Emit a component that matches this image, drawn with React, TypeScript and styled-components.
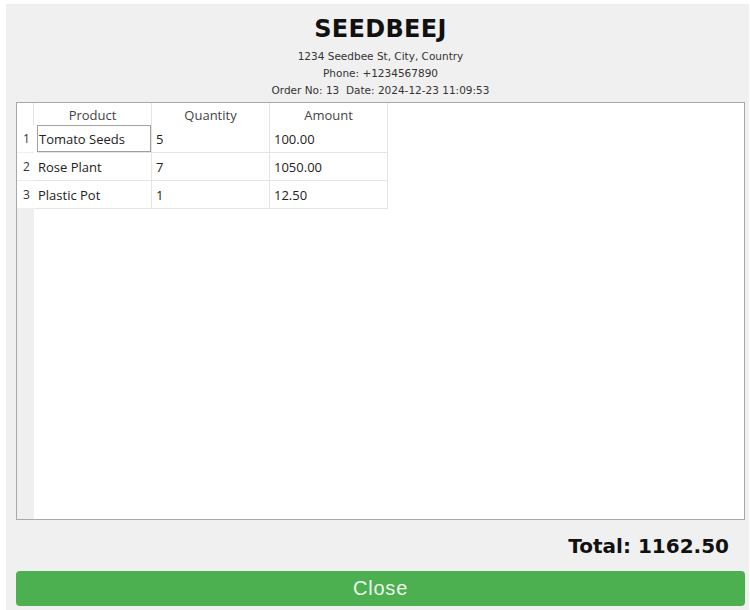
import React from "react";
import styled, { createGlobalStyle } from "styled-components";

const GlobalStyle = createGlobalStyle`
  html, body { margin: 0; padding: 0; background: #ffffff; }
  body { font-family: "DejaVu Sans", sans-serif; }
  * { box-sizing: border-box; }
`;

const Page = styled.div`
  padding: 4px 1px 0 6px;
  width: 750px;
  height: 610px;
`;

const Panel = styled.div`
  display: flex;
  flex-direction: column;
  height: 606px;
  background: #f0f0f0;
  border-top: 1px solid #f7e9e9;
  padding: 11px 4px 4px 10px;
`;

const Title = styled.h1`
  margin: 0;
  font-family: "DejaVu Sans", sans-serif;
  font-weight: bold;
  font-size: 24px;
  line-height: 26px;
  letter-spacing: 0.3px;
  text-align: center;
  color: #111;
`;

const Info = styled.div`
  margin-top: 6px;
  display: flex;
  flex-direction: column;
  align-items: center;
  font-family: "DejaVu Sans", sans-serif;
  font-size: 10.5px;
  line-height: 17px;
  color: #333;
`;

const Frame = styled.div`
  margin-top: 3px;
  flex: 1;
  border: 1px solid #a8a8a8;
  background: linear-gradient(to right, #efefef 0 17px, #ffffff 17px);
`;

const Grid = styled.div`
  display: grid;
  grid-template-columns: 17px 118px 118px 118px;
  grid-template-rows: 22px repeat(3, 28px);
  width: max-content;
  font-family: "Open Sans", sans-serif;
  font-size: 13px;
  color: #222;
`;

const HeadCell = styled.div`
  background: #fff;
  border-right: 1px solid #e4e4e4;
  display: flex;
  align-items: center;
  justify-content: center;
  color: #444;
  padding-top: 1px;
`;

const RowNum = styled.div`
  background: #fff;
  border-bottom: 1px solid #eeeeee;
  display: flex;
  align-items: center;
  justify-content: center;
  font-size: 12px;
  color: #333;
  padding-left: 2px;
`;

const Cell = styled.div<{ $selected?: boolean }>`
  background: #fff;
  border-right: 1px solid #e4e4e4;
  border-bottom: 1px solid #e4e4e4;
  display: flex;
  align-items: center;
  padding-left: 4px;
  ${(p) =>
    p.$selected
      ? `box-shadow: inset 0 0 0 1px #a0a0a0; margin-left: 3px; padding-left: 2px;`
      : ""}
`;

const Total = styled.div`
  margin-top: 14px;
  font-family: "DejaVu Sans", sans-serif;
  font-weight: bold;
  font-size: 20px;
  line-height: 24px;
  text-align: right;
  padding-right: 16px;
  color: #111;
`;

const CloseButton = styled.button`
  margin-top: 13px;
  height: 35px;
  border: none;
  border-radius: 4px;
  background: #4caf50;
  color: #eef7ee;
  font-family: "Liberation Sans", Arial, sans-serif;
  font-size: 20px;
  letter-spacing: 0.8px;
  cursor: pointer;
`;

const items = [
  { product: "Tomato Seeds", qty: "5", amount: "100.00" },
  { product: "Rose Plant", qty: "7", amount: "1050.00" },
  { product: "Plastic Pot", qty: "1", amount: "12.50" },
];

export default function App() {
  return (
    <>
      <GlobalStyle />
      <Page>
        <Panel>
          <Title>SEEDBEEJ</Title>
          <Info>
            <span>1234 Seedbee St, City, Country</span>
            <span>Phone: +1234567890</span>
            <span>Order No: 13&nbsp; Date: 2024-12-23 11:09:53</span>
          </Info>
          <Frame>
            <Grid>
              <HeadCell />
              <HeadCell>Product</HeadCell>
              <HeadCell>Quantity</HeadCell>
              <HeadCell>Amount</HeadCell>
              {items.map((it, i) => (
                <React.Fragment key={i}>
                  <RowNum>{i + 1}</RowNum>
                  <Cell $selected={i === 0}>{it.product}</Cell>
                  <Cell>{it.qty}</Cell>
                  <Cell>{it.amount}</Cell>
                </React.Fragment>
              ))}
            </Grid>
          </Frame>
          <Total>Total: 1162.50</Total>
          <CloseButton>Close</CloseButton>
        </Panel>
      </Page>
    </>
  );
}
